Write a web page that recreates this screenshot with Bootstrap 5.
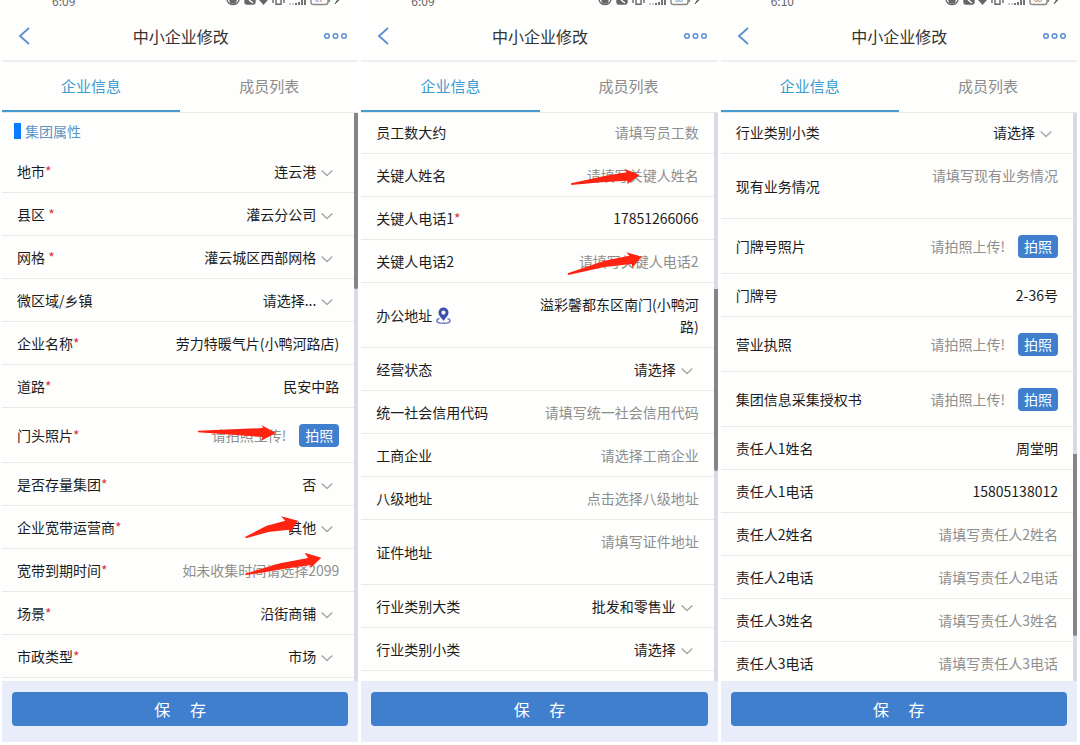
<!DOCTYPE html>
<html lang="zh-CN">
<head>
<meta charset="utf-8">
<meta name="viewport" content="width=device-width, initial-scale=1">
<title>中小企业修改</title>
<link href="https://cdn.jsdelivr.net/npm/bootstrap@5.3.0/dist/css/bootstrap.min.css" rel="stylesheet">
<style>
  body { font-family: "Noto Sans CJK SC", sans-serif; font-size: 14px; line-height: 22px; color: #1c1c1c; background: #fff; }
  .screens { gap: 3px; padding: 0 3px 0 2px; }
  .phone { flex: 1 1 0; min-width: 0; height: 100vh; padding-bottom: 3px; }
  .phone-inner { background: #fefefd; }
  .status { height: 9px; padding: 0 16px 0 50px; margin-bottom: 3px; font-size: 12px; line-height: 16px; color: #666; }
  .title-bar { height: 50px; padding: 0 11px 0 16px; border-bottom: 2px solid #efefef; }
  .title-bar h1 { font-size: 16px; line-height: 24px; color: #333; }
  .icon-btn { line-height: 0; color: #5a8fd0; }
  .icon-back { width: 20px; text-align: left; }
  .tabs { height: 51px; border-bottom: 1px solid #e8e8e8; }
  .tabs .nav-link { font-size: 15px; color: #8c8c8c; padding: 0; border-radius: 0; border-bottom: 2px solid transparent; }
  .tabs .nav-link.active { color: #3d9bcd; border-bottom-color: #4a9bcd; }
  .fields { min-width: 0; }
  .section-title { height: 37px; padding: 0 12px 2px; gap: 4px; font-size: 14px; line-height: 22px; color: #5c93c8; }
  .section-title::before { content: ""; width: 7px; height: 16px; background: #0a7cff; }
  .field { height: 43px; padding: 0 15px; border-bottom: 1px solid #e9e9e9; }
  .field-first { height: 41px; padding-bottom: 2px; }
  .field-photo { height: 55px; }
  .field-tall { height: 65px; }
  .field label { white-space: pre; }
  .star { color: #d9363e; }
  .value { border: 0; padding: 0; margin: 0; background: transparent; color: #1c1c1c; text-align: right; min-width: 0; flex: 1 1 0; outline: 0; border-radius: 0; line-height: 22px; }
  select.value { appearance: none; text-align-last: right; height: 24px; }
  textarea.value { flex: 0 1 164px; height: 44px; resize: none; overflow: hidden; }
  .value::placeholder { color: #8e8e8e; opacity: 1; }
  .chev { margin: 3px 6px 0 5px; }
  .btn-brand, .btn-brand:hover { background: #3f7fce; color: #fff; border: 0; border-radius: 4px; }
  .btn-photo { width: 40px; height: 23px; margin-left: 13px; padding: 0; font-size: 14px; line-height: 22px; }
  .track { width: 4px; background: #d9dae6; }
  .thumb { background: #858589; border-radius: 0 0 2px 2px; }
  .save-bar { padding: 11px 10px 16px; background: #e9edf9; }
  .btn-save { height: 34px; padding: 0; font-size: 16px; line-height: 24px; }
  .arrow { position: absolute; fill: #ff2412; pointer-events: none; }
  .arrow-photo { right: 78px; top: 17px; }
  .arrow-isp { right: 56px; top: 10px; }
  .arrow-date { right: 32px; top: 3px; }
  .arrow-name { right: 74px; top: 14px; }
  .arrow-tel { right: 72px; top: 12px; }
</style>
</head>
<body>
<main class="screens d-flex flex-column flex-md-row" id="screens"></main>

<script src="https://cdn.jsdelivr.net/npm/bootstrap@5.3.0/dist/js/bootstrap.bundle.min.js"></script>
<script>
const arrows = {
  photo: '<svg class="arrow arrow-photo" width="78" height="16" viewBox="25 45 234 48"><path d="M25 62 L221 54 L215 45 L259 69 L213 93 L218 81 L25 67Z"/></svg>',
  isp: '<svg class="arrow arrow-isp" width="54" height="23" viewBox="162 321 162 69"><path d="M165 384 L230 350 L286 335 L273 322 L324 335 L298 375 L297 362 L235 369 L168 388Z"/></svg>',
  date: '<svg class="arrow arrow-date" width="78" height="24" viewBox="162 429 234 72"><path d="M165 494 L270 463 L354 447 L344 431 L394 446 L361 478 L362 468 L280 480 L167 499Z"/></svg>',
  name: '<svg class="arrow arrow-name" width="70" height="17" viewBox="27 25 210 51"><path d="M30 71 L130 49 L197 38 L190 27 L236 46 L199 73 L199 63 L120 68 L31 76Z"/></svg>',
  tel: '<svg class="arrow arrow-tel" width="75" height="24" viewBox="18 276 225 72"><path d="M20 340 L130 302 L205 287 L196 277 L242 290 L214 323 L212 312 L130 321 L22 345Z"/></svg>'
};
const pin = '<svg class="ms-1" width="15" height="17" viewBox="0 0 15 17"><path d="M3.5 11.5C1.8 12 .8 12.700 .8 13.700c0 1.500 3 2.500 6.700 2.500s6.700-1 6.700-2.500c0-1-1-1.700-2.700-2.200" fill="none" stroke="#6f7fc8" stroke-width="1.500"/><path fill-rule="evenodd" fill="#3d4fae" d="M7.500 .5a5 5 0 0 0-5 5c0 3.500 3.500 5.800 5 8.500 1.500-2.700 5-5 5-8.500a5 5 0 0 0-5-5zm0 3a2.100 2.100 0 1 1 0 4.200 2.100 2.100 0 0 1 0-4.200z"/></svg>';
const chevron = '<svg class="chev flex-shrink-0" width="12" height="8" viewBox="0 0 12 8" fill="none" stroke="#a9a9a9" stroke-width="1.500"><path d="M.7 1.500 6 6.500l5.300-5"/></svg>';

/* kinds: s = drop-down, t = text, p = placeholder, a = filled text area, b = empty text area, c = photo upload */
const upload = '请拍照上传!';
const screens = [
  { time: '6:09', pct: 67, from: 0, size: 31, pinShown: true, section: '集团属性', rows: [
    ['地市*', 's', '连云港'], ['县区 *', 's', '灌云分公司'], ['网格 *', 's', '灌云城区西部网格'],
    ['微区域/乡镇', 's', '请选择...'], ['企业名称*', 't', '劳力特暖气片(小鸭河路店)'], ['道路*', 't', '民安中路'],
    ['门头照片*', 'c', upload, 'photo'], ['是否存量集团*', 's', '否'], ['企业宽带运营商*', 's', '其他', 'isp'],
    ['宽带到期时间*', 'p', '如未收集时间请选择2099', 'date'], ['场景*', 's', '沿街商铺'], ['市政类型*', 's', '市场']] },
  { time: '6:09', pct: 68, from: 31, size: 32, pinShown: false, rows: [
    ['员工数大约', 'p', '请填写员工数'], ['关键人姓名', 'p', '请填写关键人姓名', 'name'], ['关键人电话1*', 't', '17851266066'],
    ['关键人电话2', 'p', '请填写关键人电话2', 'tel'], ['办公地址', 'a', '溢彩馨都东区南门(小鸭河路)'], ['经营状态', 's', '请选择'],
    ['统一社会信用代码', 'p', '请填写统一社会信用代码'], ['工商企业', 'p', '请选择工商企业'], ['八级地址', 'p', '点击选择八级地址'],
    ['证件地址', 'b', '请填写证件地址'], ['行业类别大类', 's', '批发和零售业'], ['行业类别小类', 's', '请选择']] },
  { time: '6:10', pct: 68, from: 60, size: 32, pinShown: true, rows: [
    ['行业类别小类', 's', '请选择'], ['现有业务情况', 'b', '请填写现有业务情况'], ['门牌号照片', 'c', upload], ['门牌号', 't', '2-36号'],
    ['营业执照', 'c', upload], ['集团信息采集授权书', 'c', upload], ['责任人1姓名', 't', '周堂明'], ['责任人1电话', 't', '15805138012'],
    ['责任人2姓名', 'p', '请填写责任人2姓名'], ['责任人2电话', 'p', '请填写责任人2电话'],
    ['责任人3姓名', 'p', '请填写责任人3姓名'], ['责任人3电话', 'p', '请填写责任人3电话']] }
];

function statusIcons(s) {
  return `<svg width="116" height="6" viewBox="0 0 116 6" fill="none" stroke="#666" stroke-width="1.400">
    ${s.pinShown
      ? '<path d="M1 0c2 6 10 6 12 0"/><circle cx="7" cy="0" r="3" fill="#666"/><path d="M19 0v2q0 2 2 2h6q2 0 2-2V0z" fill="#666"/><path d="M23 0l4 3" stroke="#fff"/><path d="M34 0h7l-3.500 4z" fill="#666"/>'
      : '<path d="M13 0c2 6 10 6 12 0"/><circle cx="19" cy="0" r="3" fill="#666"/><path d="M31 0v2q0 2 2 2h6q2 0 2-2V0z" fill="#666"/><path d="M35 0l4 3" stroke="#fff"/>'}
    <path d="M47 0v3M50 0v4.300h5V0M58 0v3"/>
    <path d="M64 3v2M67 3v2" stroke="#bbb"/><path d="M70 3v2M73 2v3M76 0v5M79 0v5" stroke-width="1.800"/>
    <path d="M85 0v2q0 2.500 2.500 2.500h12q2.500 0 2.500-2.500V0M103.500 0v2" stroke="#888"/>
    <text x="89" y="2" font-size="7" fill="#666" stroke="none">${s.pct}</text>
    <path d="M112 -1l-3 5 4-4z" fill="#666" stroke-width="1"/></svg>`;
}
function field([label, kind, text, arrow], id, first) {
  const size = kind === 'c' ? 'field-photo' : 'ab'.includes(kind) ? 'field-tall' : first ? 'field-first' : '';
  const name = label.replace('*', '<span class="star">*</span>');
  const control = {
    s: `<select class="value" id="${id}"><option>${text}</option></select>${chevron}`,
    t: `<input class="value" id="${id}" value="${text}">`,
    p: `<input class="value" id="${id}" placeholder="${text}">`,
    a: `<textarea class="value" id="${id}">${text}</textarea>`,
    b: `<textarea class="value" id="${id}" placeholder="${text}"></textarea>`,
    c: `<input class="value" id="${id}" placeholder="${text}" readonly><button type="button" class="btn btn-brand btn-photo flex-shrink-0">拍照</button>`
  }[kind];
  return `<div class="field ${size} position-relative d-flex align-items-center justify-content-between">
    <label class="d-flex align-items-center" for="${id}"><span>${name}</span>${kind === 'a' ? pin : ''}</label>${control}${arrow ? arrows[arrow] : ''}</div>`;
}
document.getElementById('screens').innerHTML = screens.map((s, i) => `
  <section class="phone"><div class="phone-inner h-100 d-flex flex-column">
    <div class="status d-flex justify-content-between align-items-end"><span>${s.time}</span><span class="d-flex align-self-start">${statusIcons(s)}</span></div>
    <header class="title-bar d-flex align-items-center justify-content-between flex-shrink-0">
      <button type="button" class="btn p-0 border-0 icon-btn icon-back" aria-label="返回"><svg width="12" height="18" viewBox="0 0 12 18" fill="none" stroke="currentColor" stroke-width="1.800"><path d="M11 1 2 9l9 8"/></svg></button>
      <h1 class="m-0 fw-normal">中小企业修改</h1>
      <button type="button" class="btn p-0 border-0 icon-btn" aria-label="更多"><svg width="24" height="8" viewBox="0 0 24 8" fill="none" stroke="currentColor" stroke-width="1.500"><circle cx="4" cy="4" r="2.300"/><circle cx="12.500" cy="4" r="2.300"/><circle cx="21" cy="4" r="2.300"/></svg></button>
    </header>
    <nav class="tabs nav nav-fill flex-nowrap flex-shrink-0">
      <a class="nav-link active w-50 d-flex align-items-center justify-content-center" href="#">企业信息</a>
      <a class="nav-link w-50 d-flex align-items-center justify-content-center" href="#">成员列表</a>
    </nav>
    <div class="d-flex flex-fill overflow-hidden">
      <form class="fields flex-fill">
        ${s.section ? `<h2 class="section-title d-flex align-items-center m-0 fw-normal">${s.section}</h2>` : ''}
        ${s.rows.map((r, n) => field(r, `f${i}-${n}`, n === 0 && !s.section)).join('')}
      </form>
      <div class="track d-flex flex-column flex-shrink-0"><div style="height:${s.from}%"></div><div class="thumb" style="height:${s.size}%"></div></div>
    </div>
    <footer class="save-bar flex-shrink-0"><button type="button" class="btn btn-brand btn-save w-100">保&nbsp;&emsp;存</button></footer>
  </div></section>`).join('');
</script>
</body>
</html>
